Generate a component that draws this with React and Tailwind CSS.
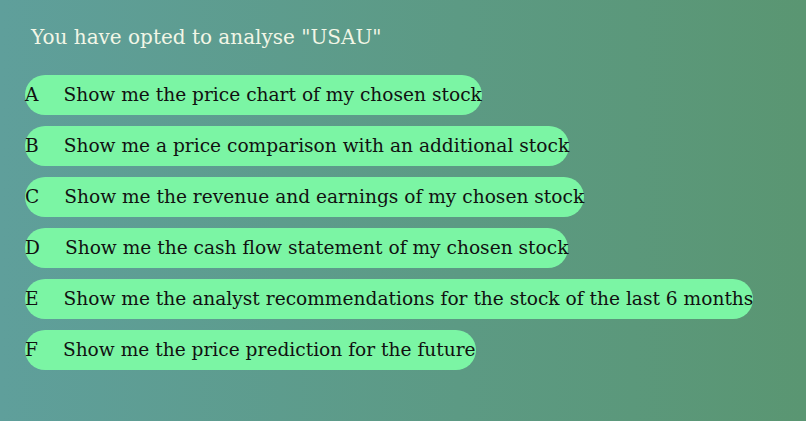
import React from "react";

const options = [
  { key: "A", label: "Show me the price chart of my chosen stock" },
  { key: "B", label: "Show me a price comparison with an additional stock" },
  { key: "C", label: "Show me the revenue and earnings of my chosen stock" },
  { key: "D", label: "Show me the cash flow statement of my chosen stock" },
  { key: "E", label: "Show me the analyst recommendations for the stock of the last 6 months" },
  { key: "F", label: "Show me the price prediction for the future" },
];

const App = () => {
  return (
    <div
      className="w-[806px] h-[421px] overflow-hidden bg-gradient-to-r from-[#5f9f9b] to-[#5a9672] px-[25px] pt-[22px]"
      style={{ fontFamily: '"DejaVu Serif", serif' }}
    >
      {/* Heading */}
      <h2 className="pl-[6px] text-[20px] leading-[30px] text-[#f2f6e6]">
        You have opted to analyse "USAU"
      </h2>

      {/* Options */}
      <div className="mt-[23px] flex flex-col items-start gap-[11px]">
        {options.map((opt) => (
          <div
            key={opt.key}
            className="h-[40px] flex items-center rounded-full bg-[#7bf5a4] text-[18.6px] text-[#111]"
          >
            <span className="mr-[25px]">{opt.key}</span>
            <span>{opt.label}</span>
          </div>
        ))}
      </div>
    </div>
  );
};

export default App;
